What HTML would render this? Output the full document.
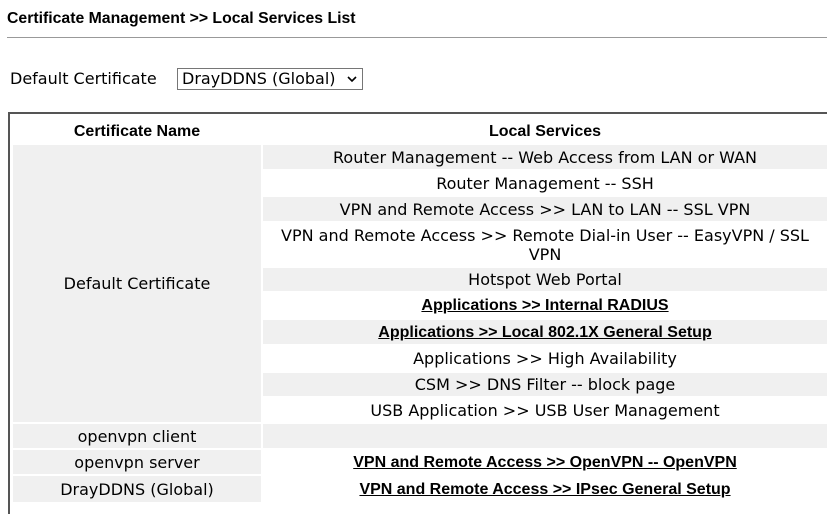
<!DOCTYPE html>
<html><head><meta charset="utf-8"><style>
body{margin:0;width:827px;height:498px;overflow:hidden;background:#fff;position:relative;font-family:"DejaVu Sans",sans-serif;color:#000}
.a{position:absolute;display:flex;align-items:center;justify-content:center;text-align:center;font-size:16px;line-height:19px;box-sizing:border-box}
.g{background:#f0f0f0}
.b{font-family:"Liberation Sans",sans-serif;font-weight:bold;font-size:16px;text-decoration:underline}
.h{font-family:"Liberation Sans",sans-serif;font-weight:bold;font-size:16px}
</style></head><body>
<div style="position:absolute;left:7px;top:10px;font:bold 15.8px 'Liberation Sans',sans-serif">Certificate Management &gt;&gt; Local Services List</div>
<div style="position:absolute;left:7px;top:37px;width:820px;height:1px;background:#999"></div>
<div style="position:absolute;left:10px;top:69px;font-size:16px">Default Certificate</div>
<div style="position:absolute;left:177px;top:68px;width:186px;height:22px;border:1px solid #767676;box-sizing:border-box;font-size:16px;line-height:20px;padding-left:4px;white-space:nowrap">DrayDDNS (Global)<svg style="position:absolute;right:5px;top:7px" width="10" height="7" viewBox="0 0 10 7"><path d="M1 1l4 4 4-4" stroke="#000" stroke-width="1.6" fill="none"/></svg></div>
<div style="position:absolute;left:8px;top:112px;width:830px;height:400px;border-left:2px solid #555;border-top:2px solid #555"></div>
<div class="a h" style="left:13px;top:116px;width:248px;height:30px">Certificate Name</div>
<div class="a h" style="left:263px;top:116px;width:564px;height:30px">Local Services</div>
<div class="a g" style="left:13px;top:145px;width:248px;height:277px">Default Certificate</div>
<div class="a g" style="left:263px;top:145px;width:564px;height:24px">Router Management -- Web Access from LAN or WAN</div>
<div class="a" style="left:263px;top:171px;width:564px;height:24px">Router Management -- SSH</div>
<div class="a g" style="left:263px;top:197px;width:564px;height:24px">VPN and Remote Access &gt;&gt; LAN to LAN -- SSL VPN</div>
<div class="a" style="left:263px;top:223px;width:564px;height:43px;padding:0 4px">VPN and Remote Access &gt;&gt; Remote Dial-in User -- EasyVPN / SSL VPN</div>
<div class="a g" style="left:263px;top:268px;width:564px;height:23px">Hotspot Web Portal</div>
<div class="a b" style="left:263px;top:293px;width:564px;height:25px">Applications &gt;&gt; Internal RADIUS</div>
<div class="a g b" style="left:263px;top:320px;width:564px;height:24px">Applications &gt;&gt; Local 802.1X General Setup</div>
<div class="a" style="left:263px;top:346px;width:564px;height:25px">Applications &gt;&gt; High Availability</div>
<div class="a g" style="left:263px;top:373px;width:564px;height:23px">CSM &gt;&gt; DNS Filter -- block page</div>
<div class="a" style="left:263px;top:398px;width:564px;height:24px">USB Application &gt;&gt; USB User Management</div>
<div class="a g" style="left:13px;top:424px;width:248px;height:24px">openvpn client</div>
<div class="a g" style="left:263px;top:424px;width:564px;height:24px"></div>
<div class="a g" style="left:13px;top:450px;width:248px;height:24px">openvpn server</div>
<div class="a b" style="left:263px;top:450px;width:564px;height:24px">VPN and Remote Access &gt;&gt; OpenVPN -- OpenVPN</div>
<div class="a g" style="left:13px;top:476px;width:248px;height:26px">DrayDDNS (Global)</div>
<div class="a b" style="left:263px;top:476px;width:564px;height:26px">VPN and Remote Access &gt;&gt; IPsec General Setup</div>
</body></html>
